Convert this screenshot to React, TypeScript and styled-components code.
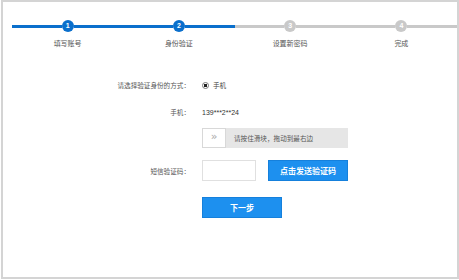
import styled, { createGlobalStyle } from "styled-components";

const steps = [
    { no: 1, name: "填写账号", done: true },
    { no: 2, name: "身份验证", done: true },
    { no: 3, name: "设置新密码", done: false },
    { no: 4, name: "完成", done: false },
];

const App = () => {
    return (
        <>
            <GlobalStyle />
            <Frame>
                <Steps>
                    {steps.map((step) => (
                        <Step key={step.no}>
                            <StepHead>
                                <Track $on={step.done} />
                                <Dot $on={step.done}>{step.no}</Dot>
                                <Track $on={step.done} />
                            </StepHead>
                            <StepName>{step.name}</StepName>
                        </Step>
                    ))}
                </Steps>

                <Form>
                    <Row $gap={31} $h={12}>
                        <Label>请选择验证身份的方式：</Label>
                        <Radio>
                            <RadioDot />
                            手机
                        </Radio>
                    </Row>
                    <Row $gap={15} $h={12}>
                        <Label>手机：</Label>
                        <Value>139***2**24</Value>
                    </Row>
                    <Row $gap={10} $h={20}>
                        <Label />
                        <Slider>
                            <Handle>»</Handle>
                            <SliderText>请按住滑块，拖动到最右边</SliderText>
                        </Slider>
                    </Row>
                    <Row $gap={12} $h={21}>
                        <Label>短信验证码：</Label>
                        <CodeInput />
                        <BlueButton>点击发送验证码</BlueButton>
                    </Row>
                    <Row $gap={16} $h={21}>
                        <Label />
                        <BlueButton>下一步</BlueButton>
                    </Row>
                </Form>
            </Frame>
        </>
    );
};

const GlobalStyle = createGlobalStyle`
    body {
        margin: 0;
        background: #fff;
        font-family: "Noto Sans CJK SC", "Noto Sans", sans-serif;
    }
`;

const Frame = styled.div`
    box-sizing: border-box;
    margin-left: 1px;
    width: 458px;
    height: 279px;
    border: 2px solid #d4d4d4;
    padding-top: 18px;
`;

const Steps = styled.div`
    display: flex;
    margin-left: 9px;
`;

const Step = styled.div`
    flex: 1;
    display: flex;
    flex-direction: column;
    align-items: center;
`;

const StepHead = styled.div`
    display: flex;
    align-items: center;
    width: 100%;
    height: 12px;
`;

const Track = styled.div<{ $on: boolean }>`
    flex: 1;
    height: 3px;
    background: ${({ $on }) => ($on ? "#0a6fcc" : "#c9c9c9")};
`;

const Dot = styled.div<{ $on: boolean }>`
    width: 12px;
    height: 12px;
    border-radius: 50%;
    background: ${({ $on }) => ($on ? "#0a6fcc" : "#c9c9c9")};
    color: #fff;
    font-family: "Liberation Sans", sans-serif;
    font-size: 7px;
    font-weight: bold;
    line-height: 12px;
    text-align: center;
`;

const StepName = styled.div`
    margin-top: 6px;
    font-size: 7px;
    line-height: 10px;
    color: #555;
`;

const Form = styled.div`
    display: flex;
    flex-direction: column;
`;

const Row = styled.div<{ $gap: number; $h: number }>`
    display: flex;
    align-items: center;
    column-gap: 12px;
    margin-top: ${({ $gap }) => $gap}px;
    height: ${({ $h }) => $h}px;
`;

const Label = styled.div`
    width: 187px;
    text-align: right;
    font-size: 6.6px;
    color: #555;
    white-space: nowrap;
`;

const Radio = styled.div`
    display: flex;
    align-items: center;
    gap: 4px;
    font-size: 6.6px;
    color: #444;
`;

const RadioDot = styled.span`
    box-sizing: border-box;
    width: 7px;
    height: 7px;
    border: 1px solid #777;
    border-radius: 50%;
    background: radial-gradient(circle, #222 0 1.6px, #fff 2px);
`;

const Value = styled.div`
    font-family: "Liberation Sans", sans-serif;
    font-size: 7px;
    color: #333;
`;

const Slider = styled.div`
    display: flex;
    width: 146px;
    height: 20px;
    background: #e6e6e6;
`;

const Handle = styled.div`
    box-sizing: border-box;
    width: 24px;
    height: 20px;
    border: 1px solid #d8d8d8;
    background: #fff;
    color: #aaa;
    font-family: "DejaVu Sans", sans-serif;
    font-size: 11px;
    line-height: 16px;
    text-align: center;
`;

const SliderText = styled.div`
    padding-left: 8px;
    font-size: 6.6px;
    line-height: 20px;
    color: #555;
`;

const CodeInput = styled.div`
    box-sizing: border-box;
    width: 54px;
    height: 21px;
    border: 1px solid #e0e0e0;
`;

const BlueButton = styled.div`
    box-sizing: border-box;
    width: 80px;
    height: 100%;
    border: 1px solid #1580dc;
    background: #1d90ef;
    color: #fff;
    font-size: 8px;
    font-weight: bold;
    display: flex;
    align-items: center;
    justify-content: center;
`;

export default App;
